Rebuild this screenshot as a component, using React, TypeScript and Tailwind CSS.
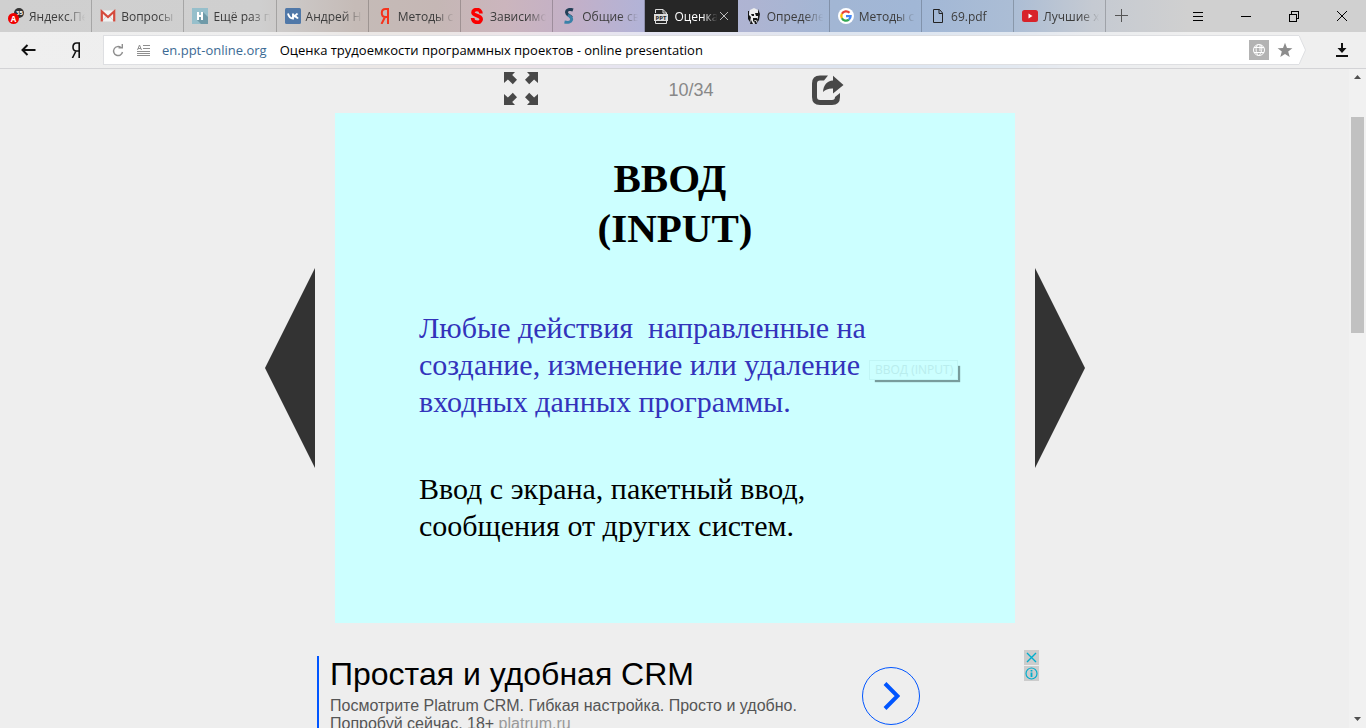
import { JSX, ReactNode } from "react"

type TabInfo = { id: string, title: string, icon: JSX.Element, active?: boolean }

const tabs: TabInfo[] = [
    { id: 'metrika', title: 'Яндекс.Пе', icon: <MetrikaIcon /> },
    { id: 'gmail', title: 'Вопросы', icon: <GmailIcon /> },
    { id: 'habr', title: 'Ещё раз п', icon: <HabrIcon /> },
    { id: 'vk', title: 'Андрей Н', icon: <VkIcon /> },
    { id: 'yandex', title: 'Методы с', icon: <YandexIcon /> },
    { id: 'study', title: 'Зависимо', icon: <LetterSIcon /> },
    { id: 'common', title: 'Общие св', icon: <CurvedSIcon /> },
    { id: 'ppt', title: 'Оценка', icon: <PptIcon />, active: true },
    { id: 'define', title: 'Определе', icon: <FaceIcon /> },
    { id: 'google', title: 'Методы с', icon: <GoogleIcon /> },
    { id: 'pdf', title: '69.pdf', icon: <FileIcon /> },
    { id: 'youtube', title: 'Лучшие х', icon: <YoutubeIcon /> },
]

export default function App(): JSX.Element {
    return (
        <div id="window" className="w-full h-screen flex flex-col overflow-hidden bg-[#eeeeee] font-['Open_Sans','Noto_Sans',sans-serif]">
            <div className="shrink-0 bg-[linear-gradient(90deg,#d0d0d0_0%,#cfcfcf_19%,#c5bbb7_26%,#c5b7b5_32%,#cbb5bd_37%,#c3b0c8_42%,#b2b3d7_47%,#aeb4d2_55%,#a2b6d4_61%,#a1b7d6_67%,#abbdd5_74%,#c5cad2_80%,#d0d0d0_87%)]">
                <TabBar />
                <AddressBar />
            </div>
            <div className="flex-1 min-h-0 flex">
                <Viewer />
                <Scrollbar />
            </div>
        </div>
    )
}

function TabBar(): JSX.Element {
    return (
        <div id="tabBar" className="h-8 flex">
            <div className="w-[81%] flex">
                {tabs.map((tab) => <Tab key={tab.id} {...tab} />)}
            </div>
            <button aria-label="Новая вкладка" className="w-8 flex items-center justify-center text-[#555555]">
                <svg width="14" height="14" viewBox="0 0 14 14" shapeRendering="crispEdges" stroke="currentColor"><path d="M0 6.5h13M6.5 0v13" /></svg>
            </button>
            <div className="ml-auto flex text-black">
                <WindowButton label="Меню"><path d="M1 2.5h10M1 6.5h10M1 10.5h10" /></WindowButton>
                <WindowButton label="Свернуть"><path d="M1 6.5h10" /></WindowButton>
                <WindowButton label="Развернуть"><path d="M1.5 4.5h7v7h-7zM3.5 4.5v-3h7v7h-2" /></WindowButton>
                <button aria-label="Закрыть" className="w-12 flex items-center justify-center">
                    <svg width="12" height="12" viewBox="0 0 12 12" stroke="currentColor"><path d="M1 1l10 10M11 1L1 11" /></svg>
                </button>
            </div>
        </div>
    )
}

function Tab({ title, icon, active }: TabInfo): JSX.Element {
    const look = active ? 'bg-[#262626] text-white border-transparent' : 'text-[#3c3c3c] border-black/20';
    return (
        <div className={`flex-1 min-w-0 flex items-center border-r pl-2 ${look}`}>
            <span className="shrink-0 mr-1">{icon}</span>
            <button className={`flex-1 min-w-0 overflow-hidden whitespace-nowrap text-left text-[12px] leading-5 pl-px pt-px [mask-image:linear-gradient(90deg,#000_65%,transparent_97%)] ${active ? '' : 'mr-1'}`}>{title}</button>
            {active && (
                <button aria-label="Закрыть вкладку" className="shrink-0 mr-2 text-[#bbbbbb]">
                    <svg width="10" height="10" viewBox="0 0 10 10" stroke="currentColor"><path d="M1 1l8 8M9 1L1 9" /></svg>
                </button>
            )}
        </div>
    )
}

function WindowButton({ label, children }: { label: string, children: ReactNode }): JSX.Element {
    return (
        <button aria-label={label} className="w-12 flex items-center justify-center">
            <svg width="12" height="13" viewBox="0 0 12 13" fill="none" stroke="currentColor" shapeRendering="crispEdges">{children}</svg>
        </button>
    )
}

function AddressBar(): JSX.Element {
    return (
        <div id="addressBar" className="h-[37px] flex items-center bg-white/65 border-b border-[#d3d3d6]">
            <button aria-label="Назад" className="w-8 ml-3 flex items-center justify-center">
                <svg width="15" height="12" viewBox="0 0 15 12" fill="none" stroke="#111" strokeWidth="2"><path d="M14.5 6H1.5M6.5 1L1.5 6l5 5" /></svg>
            </button>
            <button aria-label="Яндекс" className="w-8 ml-4 flex items-center justify-center">
                <svg width="10" height="16" viewBox="0 0 10 16" fill="none" stroke="#111" strokeWidth="1.6"><path d="M8.2 16V1H5.6C3.2 1 2 2.7 2 5c0 2.500 1.200 4 3.400 4h2.800M5 9L1.400 16" /></svg>
            </button>
            <div className="flex-1 h-[30px] ml-[11px] flex">
                <div className="flex-1 flex items-center bg-white border border-r-0 border-[#dedfe2]">
                    <button aria-label="Обновить" className="ml-2">
                        <svg width="13" height="13" viewBox="0 0 13 13" fill="none" stroke="#8f8f8f" strokeWidth="1.4"><path d="M10.5 8A4.500 4.500 0 1 1 9 3.600M6.500 3.800h3.800V0" /></svg>
                    </button>
                    <button aria-label="Режим чтения" className="ml-3">
                        <svg width="13" height="13" viewBox="0 0 13 13" fill="none" stroke="#8f8f8f" shapeRendering="crispEdges"><path d="M6 1.500h7M6 4.500h7M0 7.500h13M0 9.500h13M0 11.500h13" /><path d="M.5 6L2.500 1l2 5M1 4.500h3" shapeRendering="auto" /></svg>
                    </button>
                    <label htmlFor="address" className="ml-3 text-[13px] leading-5 text-[#3c6a94] whitespace-nowrap">en.ppt-online.org</label>
                    <input id="address" defaultValue="Оценка трудоемкости программных проектов - online presentation" className="flex-1 min-w-0 ml-[13px] text-[13px] leading-5 text-black outline-none" />
                    <button aria-label="Перевести" className="size-5 bg-[#b3b3b3] flex items-center justify-center">
                        <svg width="14" height="14" viewBox="0 0 14 14" fill="none" stroke="#fff"><circle cx="7" cy="7" r="5.500" /><path d="M2 4.500h10M2 9.500h10M6 1.500c-3 3-2 8 0 11M9 2c2 4 0 8-2 10.500M8 2v6" /></svg>
                    </button>
                    <button aria-label="В избранное" className="ml-2 mr-[6px]">
                        <svg width="16" height="16" viewBox="0 0 16 16" fill="#8c8c8c"><path d="M8 .8l2 5.200 5.400.2-4.200 3.400 1.500 5.300L8 11.900l-4.700 3 1.500-5.300L.6 6.200 6 6z" /></svg>
                    </button>
                </div>
                <svg width="7" height="30" viewBox="0 0 7 30" className="shrink-0"><path d="M0 .5L6.500 15 0 29.500" fill="#fff" stroke="#dedfe2" /></svg>
            </div>
            <button aria-label="Загрузки" className="ml-6 mr-3">
                <svg width="24" height="16" viewBox="0 0 24 16" fill="#111"><path d="M11 1h2v5h3.500L12 11 7.500 6H11zM6 13h12v2H6z" /></svg>
            </button>
        </div>
    )
}

function Viewer(): JSX.Element {
    return (
        <main id="viewer" className="flex-1 min-w-0 pl-px flex flex-col items-center">
            <div className="shrink-0 w-[680px] h-11 pl-[168px] pt-[2px] flex items-start">
                <button aria-label="На весь экран">
                    <svg width="36" height="36" viewBox="0 0 36 36" fill="#484848">
                        <path d="M1 1h11L9.200 4.100l4.800 4.700-4.200 4.400L4.900 8.500 1 12z" />
                        <path d="M35 1H24l2.800 3.100L22 8.800l4.200 4.400 4.900-4.700L35 12z" />
                        <path d="M1 34h11l-2.800-3.100 4.800-4.700-4.200-4.400-4.900 4.700L1 23z" />
                        <path d="M35 34H24l2.800-3.100-4.800-4.700 4.200-4.400 4.900 4.700L35 23z" />
                    </svg>
                </button>
                <span className="w-[100px] ml-[102px] pt-1 text-center text-[18px] leading-[30px] text-[#888888] font-['Liberation_Sans',sans-serif]">10/34</span>
                <button aria-label="Поделиться" className="ml-[68px]">
                    <svg width="36" height="36" viewBox="0 0 36 36" fill="none">
                        <path d="M19 4.500H11q-8 0-8 8V26q0 8 8 8h12q8 0 8-8v-4l-5 4q0 3-3 3H11q-3 0-3-3V12.500q0-3 3-3h4z" fill="#484848" />
                        <path d="M24 4.800L34.500 14 24 22.500v-5c-4.500-.2-7.500 1-10 3.500.5-7 4-11 10-11.500z" fill="#484848" />
                    </svg>
                </button>
            </div>
            <div className="shrink-0 flex items-center gap-5">
                <button aria-label="Предыдущий слайд">
                    <svg width="50" height="200" viewBox="0 0 50 200" fill="#333"><path d="M50 0v200L0 100z" /></svg>
                </button>
                <Slide />
                <button aria-label="Следующий слайд">
                    <svg width="50" height="200" viewBox="0 0 50 200" fill="#333"><path d="M0 0v200l50-100z" /></svg>
                </button>
            </div>
            <Advert />
        </main>
    )
}

function Slide(): JSX.Element {
    return (
        <section id="slide" className="relative w-[680px] h-[510px] pt-10 bg-[#ccffff] text-black font-['Liberation_Serif',serif]">
            <h1 className="text-center text-[41px] leading-[50px] font-bold whitespace-pre">{'ВВОД \n(INPUT)'}</h1>
            <p className="mt-14 pl-[84px] text-[30px] leading-[37px] text-[#3333bb] whitespace-pre">{'Любые действия  направленные на\nсоздание, изменение или удаление\nвходных данных программы.'}</p>
            <p className="mt-[50px] pl-[84px] text-[30px] leading-[37px] whitespace-pre">{'Ввод с экрана, пакетный ввод,\nсообщения от других систем.'}</p>
            {/* half faded tooltip, its shadow is already darker than the box */}
            <div className="absolute left-[540px] top-[253px] w-[85px] h-4 bg-[#789c9c] shadow-[0_0_1px_#789c9c]" />
            <div role="tooltip" className="absolute left-[534px] top-[247px] w-[89px] h-5 border border-[#c0f5f5] bg-[#ccffff] px-[5px] text-[12px] leading-[18px] text-[#b9eded] whitespace-nowrap font-['Open_Sans',sans-serif]">ВВОД (INPUT)</div>
        </section>
    )
}

function Advert(): JSX.Element {
    return (
        <aside id="advert" className="shrink-0 w-[728px] h-[90px] mt-[27px] pl-[6px] flex font-['Liberation_Sans',sans-serif]">
            <a href="#platrum" className="flex-1 flex mt-[6px] border-l-2 border-[#0055ff] pl-[11px]">
                <div className="w-[500px]">
                    <h2 className="text-[32px] leading-9 text-black">Простая и удобная CRM</h2>
                    <p className="mt-[5px] text-[16px] leading-[18px] text-[#555555]">Посмотрите Platrum CRM. Гибкая настройка. Просто и удобно. Попробуй сейчас. 18+ <span className="text-[#999999]">platrum.ru</span></p>
                </div>
                <div className="size-[58px] mt-[11px] ml-8 rounded-full border border-[#0055ff] flex items-center justify-center">
                    <svg width="18" height="28" viewBox="0 0 18 28" fill="none" stroke="#0055ff" strokeWidth="4"><path d="M3 1.500L15.500 14 3 26.500" /></svg>
                </div>
            </a>
            <div className="flex flex-col gap-px">
                <button aria-label="Закрыть объявление" className="size-[15px] bg-[#cccccc] flex items-center justify-center">
                    <svg width="11" height="11" viewBox="0 0 11 11" stroke="#00aecd" strokeWidth="1.4"><path d="M1 1l9 9M10 1l-9 9" /></svg>
                </button>
                <button aria-label="Об объявлении" className="size-[15px] bg-[#cccccc] flex items-center justify-center">
                    <svg width="13" height="13" viewBox="0 0 13 13" fill="none" stroke="#00aecd" strokeWidth="1.2"><circle cx="6.500" cy="6.500" r="5.500" /><path d="M6.500 5.500V10M6.500 3v1.500" strokeWidth="1.8" /></svg>
                </button>
            </div>
        </aside>
    )
}

function Scrollbar(): JSX.Element {
    return (
        <div id="scrollbar" className="w-[17px] flex flex-col items-center justify-between bg-[#f1f1f1] pt-[6px] pb-[7px]">
            <svg width="7" height="4" viewBox="0 0 7 4" fill="#505050"><path d="M0 4L3.500 0 7 4z" /></svg>
            <div className="w-full flex-1 px-[2px] pt-[38px]">
                <div className="h-[216px] bg-[#c1c1c1]" />
            </div>
            <svg width="7" height="4" viewBox="0 0 7 4" fill="#505050"><path d="M0 0l3.500 4L7 0z" /></svg>
        </div>
    )
}

function MetrikaIcon(): JSX.Element {
    return (
        <svg width="16" height="16" viewBox="0 0 16 16">
            <circle cx="11" cy="5" r="5" fill="#333" />
            <text x="11.500" y="6.500" fill="#fff" fontSize="6" fontWeight="bold" textAnchor="middle">35</text>
            <circle cx="5.500" cy="10.500" r="5.500" fill="#f00000" />
            <text x="5.500" y="13.500" fill="#fff" fontSize="8" fontWeight="bold" textAnchor="middle">A</text>
        </svg>
    )
}

function GmailIcon(): JSX.Element {
    return (
        <svg width="16" height="16" viewBox="0 0 16 16">
            <path d="M1 2.500h14v11H1z" fill="#f2f2f2" />
            <path d="M2 13.500l5-6M14 13.500l-5-6" stroke="#d5d5d5" />
            <path d="M1.800 13.500V3.500L8 9l6.200-5.500v10" fill="none" stroke="#d54b3d" strokeWidth="2.2" />
        </svg>
    )
}

function HabrIcon(): JSX.Element {
    return (
        <svg width="16" height="16" viewBox="0 0 16 16">
            <path d="M0 0h16v16H0z" fill="#96bfcb" />
            <path d="M11 4l5 5v7H9l-4-4z" fill="#6f9aa8" />
            <path d="M6 4v8M10 4v8M6 8h4" stroke="#fff" strokeWidth="2" />
        </svg>
    )
}

function VkIcon(): JSX.Element {
    return (
        <svg width="16" height="16" viewBox="0 0 16 16">
            <rect width="16" height="16" rx="1.5" fill="#5078a8" />
            <path d="M3 5.500c.6 2.500 2.200 5 5 5v-5M8 8c2 0 3.500-1 4.500-2.500M8.500 8c2 .2 3.500 1 4.500 2.500" fill="none" stroke="#fff" strokeWidth="1.9" />
        </svg>
    )
}

function YandexIcon(): JSX.Element {
    return (
        <svg width="16" height="16" viewBox="0 0 16 16" fill="none" stroke="#f5331c" strokeWidth="2">
            <path d="M11 16V1H8.500C6 1 4.800 2.700 4.800 5c0 2.500 1.200 4 3.500 4H11M8 9l-3.500 7" />
        </svg>
    )
}

function LetterSIcon(): JSX.Element {
    return (
        <svg width="16" height="16" viewBox="0 0 16 16" fill="none" stroke="#fa0000" strokeWidth="3.6">
            <path d="M12 5.500C12 0 4 .8 4 4.500 4 8 12.200 7 12.200 11.300 12.200 15.500 4 15.800 3.600 10" />
        </svg>
    )
}

function CurvedSIcon(): JSX.Element {
    return (
        <svg width="16" height="16" viewBox="0 0 16 16" fill="none" strokeWidth="3">
            <path d="M12 2C9 .8 5.500 1.500 5.500 4.500c0 2.500 4 3 5 5" stroke="#233f57" />
            <path d="M7 7c3 1.500 4 3 3.500 5-.5 2-3.500 2.800-7 2" stroke="#3981a8" />
        </svg>
    )
}

function PptIcon(): JSX.Element {
    return (
        <svg width="16" height="16" viewBox="0 0 16 16" fill="none" stroke="#ddd">
            <path d="M2.500 5V1.500h7.500L13.500 5v1M10 1.500V5h3.500M2.500 13v2.500h11V13" />
            <path d="M1 6h14v7H1z" fill="#ddd" stroke="none" />
            <text x="8" y="12" fill="#262626" stroke="none" fontSize="6" fontWeight="bold" textAnchor="middle">PPT</text>
        </svg>
    )
}

function FaceIcon(): JSX.Element {
    return (
        <svg width="16" height="16" viewBox="0 0 16 16">
            <path d="M4 2l4-2 4 2 1 5-1 6-4 3-4-3-1-6z" fill="#eee" />
            <path d="M2 3h1v4l2 2-1 5-2-3zM12 1l2 5-1 6-2 3 1-6zM5 6h3v2H6zM9 5h3v3h-2zM7 10l4 0 1 3-3-1-2 2zM5 12l2 4H4zM8 13l2 0 1 3H9z" fill="#171717" />
        </svg>
    )
}

function GoogleIcon(): JSX.Element {
    return (
        <svg width="16" height="16" viewBox="0 0 16 16" fill="none" strokeWidth="2.3">
            <circle cx="8" cy="8" r="8" fill="#fff" />
            <path d="M11.500 4.800A4.700 4.700 0 0 0 3.900 5.800" stroke="#ea4335" />
            <path d="M3.900 5.800a4.700 4.700 0 0 0 0 4.500" stroke="#fbbc05" />
            <path d="M3.900 10.200a4.700 4.700 0 0 0 7 1.500" stroke="#34a853" />
            <path d="M10.900 11.600C12 10.700 12.600 9.500 12.600 8.100H8" stroke="#4285f4" />
        </svg>
    )
}

function FileIcon(): JSX.Element {
    return (
        <svg width="16" height="16" viewBox="0 0 16 16" fill="none" stroke="#222">
            <path d="M3.500 1.500h6l3 3.500v9.500h-9zM9 1.500v4h3.500" />
        </svg>
    )
}

function YoutubeIcon(): JSX.Element {
    return (
        <svg width="16" height="16" viewBox="0 0 16 16">
            <rect y="2" width="16" height="12" rx="2.5" fill="#d8232a" />
            <path d="M6.500 5.500v5L10.500 8z" fill="#fff" />
        </svg>
    )
}
